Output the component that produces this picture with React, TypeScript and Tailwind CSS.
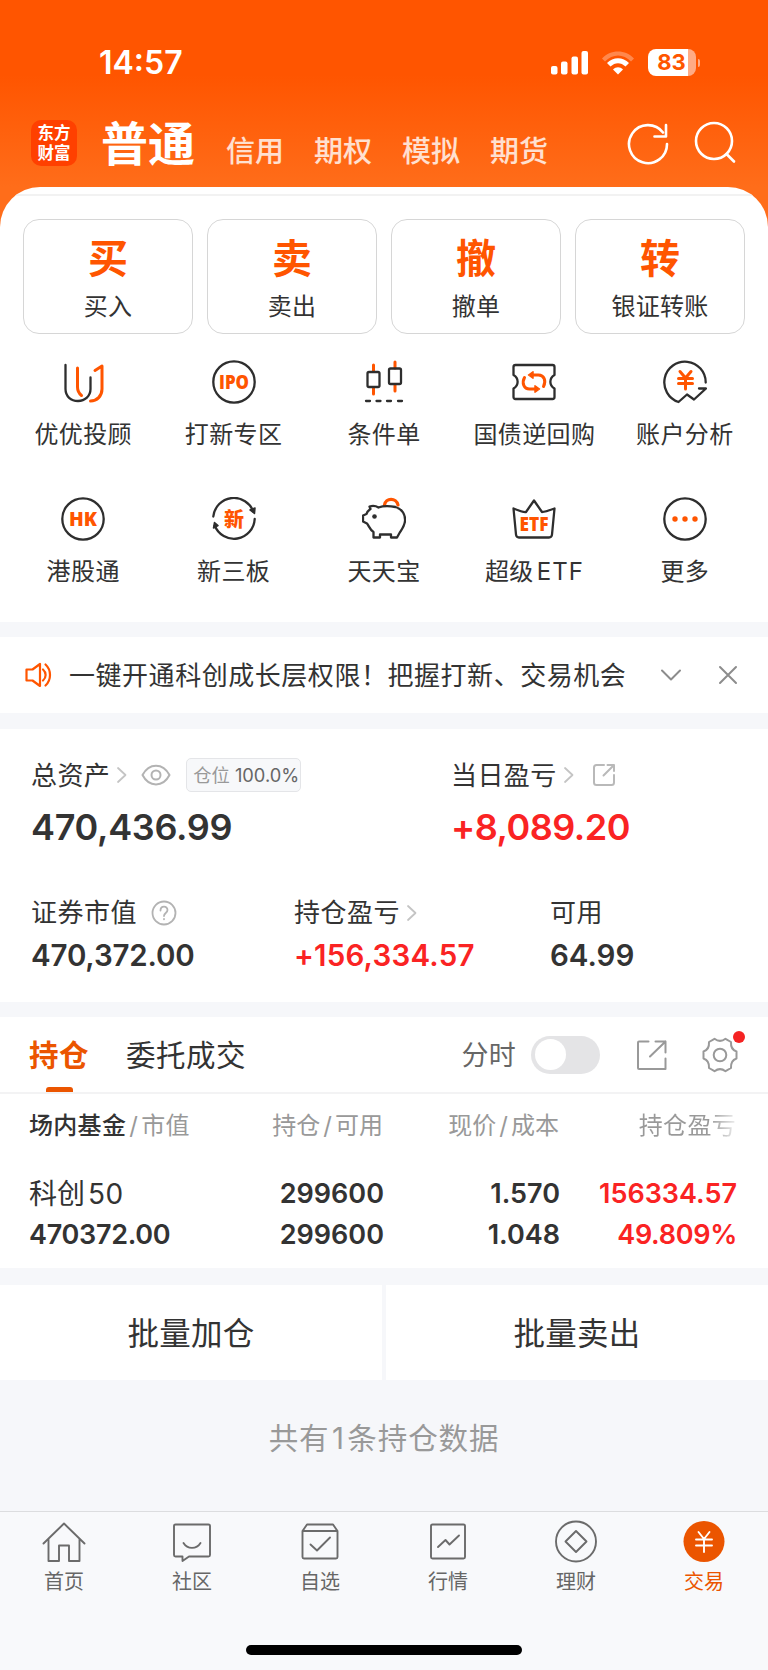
import { useState } from "react";
import type { ReactNode } from "react";

const DARK = "#2e2e2e";
const ORANGE = "#ff5500";

function Icon({
  w = 44,
  h = 44,
  stroke = DARK,
  sw = 2.3,
  className = "",
  children,
}: {
  w?: number;
  h?: number;
  stroke?: string;
  sw?: number;
  className?: string;
  children: ReactNode;
}) {
  return (
    <svg
      width={w}
      height={h}
      viewBox={`0 0 ${w} ${h}`}
      fill="none"
      stroke={stroke}
      strokeWidth={sw}
      strokeLinecap="round"
      strokeLinejoin="round"
      className={`shrink-0 ${className}`}
    >
      {children}
    </svg>
  );
}

function IconText({
  y,
  size,
  width,
  children,
}: {
  y: number;
  size: number;
  width: number;
  children: ReactNode;
}) {
  return (
    <text
      x="22"
      y={y}
      textAnchor="middle"
      textLength={width}
      lengthAdjust="spacingAndGlyphs"
      fontSize={size}
      fontWeight="800"
      fill={ORANGE}
      stroke="none"
      fontFamily="'Open Sans', 'Noto Sans CJK SC', sans-serif"
    >
      {children}
    </text>
  );
}

const quickActions = [
  { char: "买", label: "买入" },
  { char: "卖", label: "卖出" },
  { char: "撤", label: "撤单" },
  { char: "转", label: "银证转账" },
];

const features: { label: ReactNode; icon: ReactNode }[] = [
  {
    label: "优优投顾",
    icon: (
      <Icon>
        <path d="M4.500 5v24c0 7.500 5.500 12 12.500 12s12.500-5 12.500-12V17.500" />
        <path d="M16.500 8v19c0 4 1.500 6.500 4 8.500" stroke={ORANGE} strokeWidth="3" />
        <path d="M34 10.500l7-4.500v23c0 7-5 12-11.500 12" stroke={ORANGE} strokeWidth="3" />
      </Icon>
    ),
  },
  {
    label: "打新专区",
    icon: (
      <Icon>
        <circle cx="22" cy="22" r="20.700" />
        <IconText y={29} size={19.5} width={30}>IPO</IconText>
      </Icon>
    ),
  },
  {
    label: "条件单",
    icon: (
      <Icon>
        <path d="M11.500 5v6M11.500 28v6M33 2V8M33 25v6" stroke={ORANGE} strokeWidth="3" />
        <rect x="5.500" y="12" width="12" height="15" rx="1.500" />
        <rect x="27" y="8.500" width="12" height="15.500" rx="1.500" />
        <path d="M4 41h4M14.500 41h4M25 41h4M36 41h4" />
      </Icon>
    ),
  },
  {
    label: "国债逆回购",
    icon: (
      <Icon>
        <path d="M3.500 5h37q2 0 2 2v8c-5.500 3-5.500 10.500 0 13.500v8.500q0 2-2 2h-37q-2 0-2-2v-8.500c5.500-3 5.500-10.500 0-13.500V7q0-2 2-2z" />
        <g stroke={ORANGE} strokeWidth="3">
          <path d="M12.500 17.500c-3 5.500-.5 11.500 5 11.500h6" />
          <path d="M31.500 26.500c3-5.500.5-11.500-5-11.500h-6" />
          <path d="M23 25.800v6.400l4.500-3.200zM21 11.800v6.400l-4.500-3.200z" fill={ORANGE} strokeWidth="1.500" />
        </g>
      </Icon>
    ),
  },
  {
    label: "账户分析",
    icon: (
      <Icon>
        <path d="M42.700 22.500A20.700 20.700 0 1 0 15.500 42l8.500-7.500 7 5L43 28.500h-7" />
        <path
          d="M17 11.500l5.500 6.500 5.500-6.500M15.500 18.500h14M15.500 23.500h14M22.500 18v11"
          stroke={ORANGE}
          strokeWidth="3"
        />
      </Icon>
    ),
  },
  {
    label: "港股通",
    icon: (
      <Icon>
        <circle cx="22" cy="22" r="20.700" />
        <IconText y={29} size={19.5} width={28}>HK</IconText>
      </Icon>
    ),
  },
  {
    label: "新三板",
    icon: (
      <Icon>
        <path d="M1.300 19.500A20.700 20.700 0 0 1 41.500 15M42.700 22a20.700 20.700 0 0 1-40 6.500" />
        <path d="M38 13l4.500 3.500.5-5.500zM1.500 31l1-5.500 3.500 3z" fill={DARK} strokeWidth="1.500" />
        <IconText y={29.5} size={20} width={20}>新</IconText>
      </Icon>
    ),
  },
  {
    label: "天天宝",
    icon: (
      <Icon>
        <path d="M22.500 8c1-7.500 12-7.500 13.500 0" stroke={ORANGE} strokeWidth="3.200" />
        <path d="M7.500 9.500q5-1.500 9 1c4-1.500 12-1.500 17-.5 7 2 10 8 9.500 14-.5 5-3 8-5.500 12l-2.500 4.500h-6v-3H18v3h-6.500V35C8 33 7 29 5 26.500l-4-2v-6l3.500-1.500C5 14 6.500 13.500 8.500 12z" />
        <circle cx="12.500" cy="19.500" r="2.300" fill={DARK} stroke="none" />
      </Icon>
    ),
  },
  {
    label: (
      <>
        超级<span className="ml-[3px] tracking-[1px]">ETF</span>
      </>
    ),
    icon: (
      <Icon>
        <path d="M1.500 11.500q9.500 4 12.500 3.500L22 3.500 30 15q3 0 12.500-3.500l-2.500 26q-.3 3-3 3H7q-2.700 0-3-3z" />
        <IconText y={33.5} size={19} width={29}>ETF</IconText>
      </Icon>
    ),
  },
  {
    label: "更多",
    icon: (
      <Icon>
        <circle cx="22" cy="22" r="20.700" />
        <g fill={ORANGE} stroke="none">
          <circle cx="12" cy="22" r="2.700" />
          <circle cx="22" cy="22" r="2.700" />
          <circle cx="32" cy="22" r="2.700" />
        </g>
      </Icon>
    ),
  },
];

const navItems: { label: string; icon: ReactNode }[] = [
  {
    label: "首页",
    icon: <path d="M1.500 23.500L22 3.500l20.500 20M6.500 19v22h10.500V25.500h10V41h10.500V19" />,
  },
  {
    label: "社区",
    icon: (
      <>
        <path d="M5.500 4.500h33q1.500 0 1.500 1.500v29q0 1.500-1.500 1.500H19L12.500 41v-4.500h-7Q4 36.500 4 35V6q0-1.500 1.500-1.500z" />
        <path d="M13.500 23c4 6.500 13 6.500 17 0" />
      </>
    ),
  },
  {
    label: "自选",
    icon: (
      <>
        <path d="M4.500 11l4.500-6.500h26l4.500 6.500v26q0 1.500-1.500 1.500H6q-1.500 0-1.500-1.500zM4.500 11h35" />
        <path d="M12.500 24.500l6.500 6L32 17.500" />
      </>
    ),
  },
  {
    label: "行情",
    icon: (
      <>
        <rect x="5" y="4.500" width="34" height="34" rx="1.500" />
        <path d="M12 27l7.500-7 4 4.500 9.500-9" />
      </>
    ),
  },
  {
    label: "理财",
    icon: (
      <>
        <circle cx="22" cy="21.500" r="20" />
        <path d="M22 11l10.500 10.500L22 32 11.500 21.500z" />
      </>
    ),
  },
  {
    label: "交易",
    icon: (
      <>
        <circle cx="22" cy="21.500" r="20.500" fill="#eb5500" stroke="none" />
        <path d="M16.500 12l5.500 7 5.500-7M14 19.500h16M14 25.500h16M22 19.500v12.500" stroke="#fff" />
      </>
    ),
  },
];

function ArrowRight() {
  return (
    <Icon w={12} h={18} stroke="#c4c4c4" sw={1.8}>
      <path d="M2 2l7.500 7L2 16" />
    </Icon>
  );
}

function StatusBar() {
  return (
    <div className="flex h-[100px] items-center pt-[25px] pr-[68px] pl-[99px]">
      <div className="flex-1 pt-px text-[32px] font-semibold">14:57</div>
      <Icon w={38} h={26} stroke="none">
        <g fill="#fff">
          <rect x="0" y="16" width="6.500" height="8.500" rx="2" />
          <rect x="10" y="11.500" width="6.500" height="13" rx="2" />
          <rect x="20.500" y="6.500" width="6.500" height="18" rx="2" />
          <rect x="30.500" y="1" width="6.500" height="23.500" rx="2" />
        </g>
      </Icon>
      <Icon w={32} h={24} stroke="none" className="ml-[13px]">
        <path d="M0 7.500C8-2 24-2 32 7.500l-3 3c-7.500-8-18.500-8-26 0z" fill="#fff" opacity=".3" />
        <path d="M5 12c6-6.500 16-6.500 22 0l-3.500 3.500c-4.500-4.500-10.500-4.500-15 0z" fill="#fff" />
        <path d="M11 18.500c3-3 7-3 10 0l-5 5z" fill="#fff" />
      </Icon>
      <div className="ml-[14px] flex h-[27px] w-[48px] overflow-hidden rounded-[8px] bg-[linear-gradient(90deg,#fff_83%,#ffab85_83%)]">
        <span className="w-full text-center text-[22px] leading-[27px] font-bold text-[#ff5500]">
          83
        </span>
      </div>
      <div className="ml-[2px] h-[8px] w-[2.500px] rounded-r-full bg-[#ffab85]" />
    </div>
  );
}

function Header() {
  return (
    <div className="flex h-[87px] items-start pt-[20px] pr-[32px] pl-[31px]">
      <div className="flex h-[46px] w-[46px] flex-col items-center justify-center rounded-[10px] bg-[#ff4000] text-[16.500px] leading-[20px] font-bold">
        <span className="h-[20px]">东方</span>
        <span className="h-[20px]">财富</span>
      </div>
      <div className="ml-[24px] text-[47px] leading-[47px] font-bold">普通</div>
      <div className="mt-[17px] ml-[31px] flex flex-1 gap-[30px] text-[29px] leading-[30px] font-medium text-white/80">
        <span>信用</span>
        <span>期权</span>
        <span>模拟</span>
        <span>期货</span>
      </div>
      <Icon w={42} h={44} stroke="#fff" sw={2.6} className="mt-[1px]">
        <path d="M40 23A19 19 0 1 1 36 11.500" />
        <path d="M39 4v11.500H27.500" />
      </Icon>
      <Icon w={42} h={44} stroke="#fff" sw={2.6} className="ml-[25px]">
        <circle cx="20" cy="21" r="18" />
        <path d="M32.500 34l7.500 7.500" />
      </Icon>
    </div>
  );
}

function Notice() {
  return (
    <div className="flex h-[76px] items-center bg-white pr-[30px] pl-[25px]">
      <Icon w={28} h={26} stroke={ORANGE} sw={2.2}>
        <path d="M1.500 7.500h6L15 2v22l-7.500-5.500h-6z" />
        <path d="M18 7.500c3.500 3 3.500 8 0 11M20.500 2.500c6 5.500 6 15.500 0 21" />
      </Icon>
      <span className="ml-[16px] flex-1 pt-[2px] text-[26px] tracking-[0.540px]">
        一键开通科创成长层权限！把握打新、交易机会
      </span>
      <Icon w={22} h={14} stroke="#8c8c8c" sw={2}>
        <path d="M2 2.500l9 9 9-9" />
      </Icon>
      <Icon w={20} h={20} stroke="#8c8c8c" sw={2} className="ml-[36px]">
        <path d="M2 2l16 16M18 2L2 18" />
      </Icon>
    </div>
  );
}

function Assets() {
  return (
    <div className="h-[273px] bg-white pt-[29px] pl-[31px]">
      <div className="flex">
        <div className="w-[420px]">
          <div className="flex h-[34px] items-center text-[26px] tracking-[0.400px]">
            <span className="pt-[2px]">总资产</span>
            <span className="ml-[6px]">
              <ArrowRight />
            </span>
            <Icon w={30} h={22} stroke="#b3b3b3" sw={2} className="ml-[13px]">
              <path d="M1.500 11C8-1.500 22-1.500 28.500 11 22 23.500 8 23.500 1.500 11z" />
              <circle cx="15" cy="11" r="4.500" />
            </Icon>
            <div className="ml-[15px] flex h-[34px] w-[115px] items-center justify-end gap-[5px] rounded-[5px] border-[1.500px] border-[#e4e5e8] bg-[#f7f8fa] pt-px pr-px text-[18.300px] tracking-normal whitespace-nowrap text-[#999]">
              仓位<span className="text-[#666]">100.0%</span>
            </div>
          </div>
          <div className="mt-[16px] text-[36px] leading-[39px] font-semibold tracking-[-0.300px]">
            470,436.99
          </div>
        </div>
        <div>
          <div className="flex h-[34px] items-center text-[26px] tracking-[0.400px]">
            <span className="pt-[2px]">当日盈亏</span>
            <span className="ml-[6px]">
              <ArrowRight />
            </span>
            <Icon w={24} h={24} stroke="#b9b9b9" sw={2} className="ml-[17px]">
              <path d="M12 2H4.500Q2 2 2 4.500v15Q2 22 4.500 22h15q2.500 0 2.500-2.500V12" />
              <path d="M11.500 12.500L22 2M15.500 2H22v6" />
            </Icon>
          </div>
          <div className="mt-[16px] text-[36px] leading-[39px] font-semibold tracking-[-0.500px] text-[#fa2323]">
            +8,089.20
          </div>
        </div>
      </div>

      <div className="mt-[50px] flex">
        <div className="w-[263px]">
          <div className="flex h-[31px] items-center text-[26px] tracking-[0.500px]">
            <span className="pt-px">证券市值</span>
            <Icon w={26} h={26} stroke="#b3b3b3" sw={1.8} className="ml-[14px]">
              <circle cx="13" cy="13" r="11.500" />
              <path d="M9.500 10.500c0-5 7-5 7-.5 0 3-3.500 3-3.500 6M13 19v.3" />
            </Icon>
          </div>
          <div className="mt-[11px] text-[29.500px] leading-[32px] font-semibold tracking-[-0.150px]">
            470,372.00
          </div>
        </div>
        <div className="w-[256px]">
          <div className="flex h-[31px] items-center text-[26px] tracking-[0.500px]">
            <span className="pt-px">持仓盈亏</span>
            <span className="ml-[6px]">
              <ArrowRight />
            </span>
          </div>
          <div className="mt-[11px] text-[29.500px] leading-[32px] font-semibold tracking-[0.200px] text-[#fa2323]">
            +156,334.57
          </div>
        </div>
        <div>
          <div className="flex h-[31px] items-center text-[26px] tracking-[0.500px]">
            <span className="pt-px">可用</span>
          </div>
          <div className="mt-[11px] text-[29.500px] leading-[32px] font-semibold">64.99</div>
        </div>
      </div>
    </div>
  );
}

function Tabs() {
  const [timeShare, setTimeShare] = useState(false);
  return (
    <div className="flex h-[77px] items-center border-b-2 border-[#f3f3f4] bg-white pr-[30px] pl-[29px]">
      <div className="relative flex h-full items-center pt-[2px] text-[29.500px] font-semibold tracking-[0.500px] text-[#eb5500]">
        持仓
        <div className="absolute bottom-0 left-[17px] h-[5px] w-[27px] rounded-t-[3px] bg-[#eb5500]" />
      </div>
      <div className="ml-[37px] flex-1 pt-[2px] text-[29.500px] tracking-[0.500px]">委托成交</div>
      <span className="pt-[2px] text-[27px] tracking-[0.300px] text-[#666]">分时</span>
      <button
        type="button"
        role="switch"
        aria-checked={timeShare}
        onClick={() => setTimeShare(!timeShare)}
        className="ml-[15px] h-[38px] w-[69px] rounded-full bg-[#e4e4e6] px-[4px]"
      >
        <span
          className={`block h-[31px] w-[31px] rounded-full bg-white ${
            timeShare ? "translate-x-[30px]" : ""
          }`}
        />
      </button>
      <Icon w={32} h={32} stroke="#999" sw={2} className="ml-[36px]">
        <path d="M12.500 2.500H3Q2 2.500 2 3.500V29q0 1 1 1h26.500V19.500" />
        <path d="M14 17.500L29.500 2.500M19.500 2.500h10v11" />
      </Icon>
      <div className="relative ml-[34px] pt-px">
        <Icon w={36} h={36} stroke="#999" sw={2}>
          <path d="M12.500 1.800Q18 6 23.500 1.800L29 5q-.5 7.500 5.500 9.500v7Q28.500 23.500 29 31l-5.500 3.200Q18 30 12.500 34.200L7 31q.5-7.500-5.500-9.500v-7Q7.500 12.500 7 5z" />
          <circle cx="18" cy="18" r="6.300" />
        </Icon>
        <div className="absolute -top-[5px] left-[31px] h-[12px] w-[12px] rounded-full bg-[#f52323]" />
      </div>
    </div>
  );
}

function Holdings() {
  return (
    <div className="h-[174px] bg-white pt-[16px] pr-[31px] pl-[29px]">
      <div className="grid grid-cols-[178px_176px_176px_177px] text-right text-[24px] leading-[31px] whitespace-nowrap text-[#999]">
        <span className="text-left tracking-[0.300px]">
          <span className="font-medium text-[#333]">场内基金</span>
          <span className="mx-[3px]">/</span>市值
        </span>
        <span>
          持仓<span className="mx-[3px]">/</span>可用
        </span>
        <span>
          现价<span className="mx-[3px]">/</span>成本
        </span>
        <span className="bg-linear-to-r from-[#999] from-85% to-[#eee] bg-clip-text tracking-[0.300px] text-transparent">
          持仓盈亏
        </span>
      </div>
      <div className="mt-[33px] grid grid-cols-[179px_176px_176px_177px] gap-y-[1px] text-right text-[27px] leading-[40px] font-semibold">
        <span className="text-left text-[28px] font-normal">
          科创<span className="ml-[3px] tracking-[0.500px]">50</span>
        </span>
        <span>299600</span>
        <span>1.570</span>
        <span className="text-[#fa2323]">156334.57</span>
        <span className="text-left tracking-[-0.300px]">470372.00</span>
        <span>299600</span>
        <span>1.048</span>
        <span className="tracking-[-0.300px] text-[#fa2323]">49.809%</span>
      </div>
    </div>
  );
}

function BottomNav() {
  return (
    <div className="flex h-[159px] flex-col items-center border-t border-[#dcdddf] bg-[#f8f9fb]">
      <div className="grid w-full grid-cols-6 pt-[8px]">
        {navItems.map((item) => (
          <div
            key={item.label}
            className={`flex flex-col items-center text-[20px] leading-[24px] ${
              item.label === "交易" ? "text-[#eb5500]" : "text-[#666]"
            }`}
          >
            <Icon w={44} h={44} stroke="#6b6b6b" sw={1.9}>
              {item.icon}
            </Icon>
            <span className="mt-[6px]">{item.label}</span>
          </div>
        ))}
      </div>
      <div className="mt-[51px] h-[10px] w-[276px] rounded-full bg-black" />
    </div>
  );
}

export default function App() {
  return (
    <div className="flex h-[1670px] w-[768px] flex-col overflow-hidden bg-[#f6f7fa] font-['Inter','Noto_Sans_CJK_SC',sans-serif] leading-none text-[#333]">
      <div className="bg-[linear-gradient(180deg,#ff5500_0px,#ff5500_75px,#ff6d1a_187px,#ff6d1a_100%)]">
        <div className="text-white">
          <StatusBar />
          <Header />
        </div>

        <div className="h-[435px] overflow-hidden rounded-t-[40px] bg-white">
          <div className="mt-[7px] h-[2px] bg-[#f2f2f2]" />
          <div className="mt-[22.500px] grid grid-cols-4 gap-[14px] px-[23px]">
            {quickActions.map((item) => (
              <div
                key={item.char}
                className="flex h-[115px] flex-col items-center rounded-[16px] border-[1.500px] border-[#d6d6d6] pt-[19px]"
              >
                <span className="text-[40px] leading-[40px] font-bold text-[#ff5500]">
                  {item.char}
                </span>
                <span className="mt-[15px] text-[24px] leading-[26px] tracking-[0.200px]">
                  {item.label}
                </span>
              </div>
            ))}
          </div>

          <div className="mt-[26px] grid grid-cols-5 gap-y-[62.500px] px-[8px]">
            {features.map((item, i) => (
              <div key={i} className="flex flex-col items-center">
                {item.icon}
                <span className="mt-[17px] h-[14px] text-[24px] leading-[28px] tracking-[0.400px] whitespace-nowrap">
                  {item.label}
                </span>
              </div>
            ))}
          </div>
        </div>
      </div>

      <div className="mt-[15px]">
        <Notice />
      </div>
      <div className="mt-[16px]">
        <Assets />
      </div>
      <div className="mt-[15px]">
        <Tabs />
        <Holdings />
      </div>

      <div className="mt-[17px] flex gap-[4px] text-[31.500px] tracking-[0.300px]">
        <button type="button" className="h-[95px] flex-1 bg-white pt-[2px]">
          批量加仓
        </button>
        <button type="button" className="h-[95px] flex-1 bg-white pt-[2px]">
          批量卖出
        </button>
      </div>

      <div className="flex flex-1 items-center justify-center pb-[14px] text-[29.500px] tracking-[0.900px] text-[#999]">
        共有<span className="mx-[2.500px]">1</span>条持仓数据
      </div>

      <BottomNav />
    </div>
  );
}
